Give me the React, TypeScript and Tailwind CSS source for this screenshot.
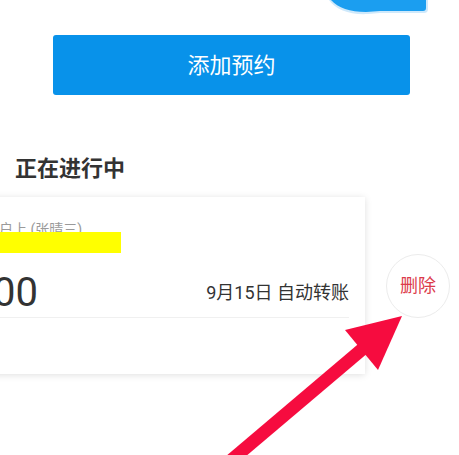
const CJK = "font-['Roboto','Noto_Sans_CJK_SC',sans-serif]";

function TopBlob() {
  // bottom edge of the header illustration that is scrolled mostly out of view
  return (
    <div className="flex h-[14px] justify-end pr-[27px]">
      <svg width="104" height="16" viewBox="0 0 104 16" className="overflow-visible">
        <path d="M1 0 C8 10 22 15 40 14 L52 13 L96 13 Q100 13 100 9 L100 0 Z" fill="#cfe9fb" />
        <path d="M3 0 C10 8 22 12 38 12 L52 11 L95 11 Q98 11 98 8 L98 0 Z" fill="#1b9ef0" />
      </svg>
    </div>
  );
}

function PlanCard() {
  return (
    <div className="relative ml-[-101px] w-[466px] shrink-0 bg-white px-4 pt-[22px] pb-[56px] shadow-[0_1px_7px_rgba(0,0,0,0.13)]">
      <p className="text-[14px] leading-[20px] text-[#9a9a9a]">转入余额宝账户上 (张晴三)</p>
      <div className="absolute top-[35px] left-[16px] h-[21px] w-[206px] bg-[#ffff00]" />
      <div className="mt-[30px] flex items-center justify-between border-b border-[#f0f0f0]">
        <span className="text-[40px] leading-[48px] text-[#333]">500.00</span>
        <span className="text-[18px] leading-[24px] text-[#333]">9月15日 自动转账</span>
      </div>
    </div>
  );
}

export default function App() {
  return (
    <div className={`relative h-[455px] w-[459px] overflow-hidden bg-white ${CJK}`}>
      <TopBlob />

      <button className="mt-[21px] ml-[53px] flex h-[60px] w-[357px] items-center justify-center rounded-[3px] bg-[#0892ea] text-[22px] text-white">
        添加预约
      </button>

      <h2 className="mt-[59px] pl-[15px] text-[22px] leading-[30px] font-bold text-[#333]">正在进行中</h2>

      <div className="mt-[13px] flex items-center">
        <PlanCard />
        <button className="ml-[21px] flex h-[64px] w-[64px] shrink-0 items-center justify-center rounded-full border border-[#ececec] bg-white text-[18px] text-[#dc3b4b]">
          删除
        </button>
      </div>

      {/* annotation arrow pointing at the delete button */}
      <svg className="pointer-events-none absolute inset-0" width="459" height="455" viewBox="0 0 459 455">
        <line x1="222" y1="468" x2="366" y2="346" stroke="#f60c3f" strokeWidth="13" />
        <polygon points="402,316 345,330 378,370" fill="#f60c3f" />
      </svg>
    </div>
  );
}
